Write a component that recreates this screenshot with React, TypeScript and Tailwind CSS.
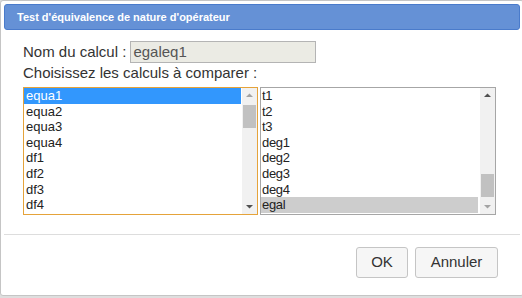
const LEFT = ["equa1", "equa2", "equa3", "equa4", "df1", "df2", "df3", "df4"];
const RIGHT = ["t1", "t2", "t3", "deg1", "deg2", "deg3", "deg4", "egal"];

const Arrow = ({ up, dark }: { up: boolean; dark: boolean }) => (
  <svg width="15" height="15" viewBox="0 0 15 15" className="block">
    <path
      d={up ? "M4 9 L7.5 5.5 L11 9 Z" : "M4 6 L7.5 9.5 L11 6 Z"}
      fill={dark ? "#505050" : "#a3a3a3"}
    />
  </svg>
);

const Scrollbar = ({ thumbTop, atTop }: { thumbTop: number; atTop: boolean }) => (
  <div className="relative w-[15px] h-full bg-[#f1f1f1] flex flex-col justify-between">
    <Arrow up dark={!atTop} />
    <div
      className="absolute left-[1px] w-[13px] h-[23px] bg-[#c1c1c1]"
      style={{ top: thumbTop }}
    />
    <Arrow up={false} dark={atTop} />
  </div>
);

const App = () => {
  return (
    <div className="w-[522px] h-[298px] overflow-hidden bg-[#dedede] font-['Liberation_Sans',Arial,sans-serif]">
      <div className="w-[524px] h-[296px] bg-white border border-[#c5c5c5] rounded-[3px] p-[3px]">
        <div className="h-[26px] bg-[#6591d6] border border-[#4a7bcb] rounded-[3px] pl-[12px] flex items-center">
          <span className="text-[11px] font-bold text-white">
            Test d'équivalence de nature d'opérateur
          </span>
        </div>

        <div className="px-[19px] text-[15px] text-[#333]">
          <div className="mt-[11px] flex items-center h-[22px]">
            <span className="mr-[4px]">Nom du calcul :</span>
            <div className="w-[186px] h-[22px] bg-[#ebebe4] border border-[#b4b4b4] pl-[2px] flex items-center text-[#555]">
              egaleq1
            </div>
          </div>
          <div className="leading-[18px] mt-[1px]">Choisissez les calculs à comparer :</div>

          <div className="mt-[5px] flex gap-[2px]">
            <div className="w-[235px] h-[128px] border border-[#e5a33a] flex">
              <div className="flex-1 text-[13px] text-[#222]">
                {LEFT.map((it, i) => (
                  <div
                    key={it}
                    className={`h-[15.6px] leading-[15.6px] pl-[2px] ${
                      i === 0 ? "bg-[#3297fd] text-white" : ""
                    }`}
                  >
                    {it}
                  </div>
                ))}
              </div>
              <div className="pl-[1px]">
                <Scrollbar thumbTop={17} atTop />
              </div>
            </div>

            <div className="w-[236px] h-[128px] border border-[#a6a6a6] flex">
              <div className="flex-1 text-[13px] text-[#222] tracking-[-0.3px]">
                {RIGHT.map((it, i) => (
                  <div
                    key={it}
                    className={`h-[15.6px] leading-[15.6px] pl-[1px] ${
                      i === RIGHT.length - 1 ? "bg-[#cdcdcd]" : ""
                    }`}
                  >
                    {it}
                  </div>
                ))}
              </div>
              <div className="pl-[2px]">
                <Scrollbar thumbTop={86} atTop={false} />
              </div>
            </div>
          </div>
        </div>

        <div className="mt-[19px] h-px bg-[#dddddd]" />

        <div className="mt-[12px] pr-[22px] flex justify-end gap-[7px]">
          <button className="w-[52px] h-[31px] bg-[#f6f6f6] border border-[#c5c5c5] rounded-[3px] text-[15px] text-[#333]">
            OK
          </button>
          <button className="w-[83px] h-[31px] bg-[#f6f6f6] border border-[#c5c5c5] rounded-[3px] text-[15px] text-[#333]">
            Annuler
          </button>
        </div>
      </div>
    </div>
  );
};

export default App;
